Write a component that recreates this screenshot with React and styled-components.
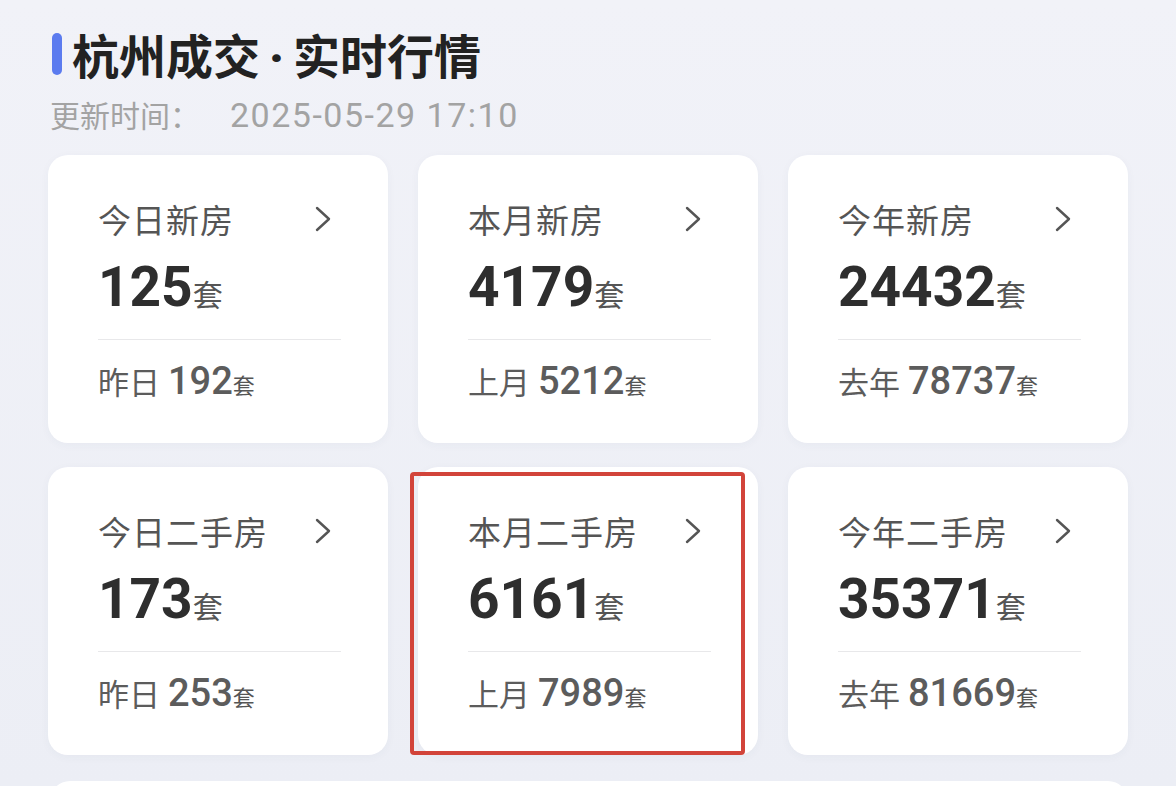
import React from 'react';
import styled, { createGlobalStyle } from 'styled-components';

const CJK = `'Noto Sans CJK SC', 'Noto Sans', sans-serif`;
const NUM = `Roboto, 'Noto Sans CJK SC', sans-serif`;

const STATS = [
    { title: '今日新房', value: 125, prevLabel: '昨日', prev: 192 },
    { title: '本月新房', value: 4179, prevLabel: '上月', prev: 5212 },
    { title: '今年新房', value: 24432, prevLabel: '去年', prev: 78737 },
    { title: '今日二手房', value: 173, prevLabel: '昨日', prev: 253 },
    { title: '本月二手房', value: 6161, prevLabel: '上月', prev: 7989, marked: true },
    { title: '今年二手房', value: 35371, prevLabel: '去年', prev: 81669 },
];

const GlobalStyle = createGlobalStyle`
    html, body {
        margin: 0;
        background: #eef0f6;
        overflow: hidden;
    }
`;

const Page = styled.div`
    width: 1176px;
    height: 786px;
    box-sizing: border-box;
    padding: 31px 0 0 48px;
    background: linear-gradient(180deg, #f1f2f8 0%, #eceef5 100%);
    overflow: hidden;
`;

const Header = styled.div`
    margin-left: 4px;
`;

const TitleRow = styled.div`
    display: flex;
    align-items: center;
    gap: 10px;
    height: 46px;
`;

const Bar = styled.span`
    width: 10px;
    height: 42px;
    border-radius: 5px;
    background: #5b7bef;
`;

const Title = styled.h1`
    margin: 0;
    height: 46px;
    font-family: ${CJK};
    font-size: 47px;
    line-height: 46px;
    font-weight: 700;
    color: #222;
`;

const Dot = styled.span`
    font-family: Roboto, sans-serif;
    font-weight: 900;
    line-height: 0;
    margin: 0 9px;
`;

const Updated = styled.div`
    margin-top: 17px;
    display: flex;
    align-items: baseline;
    gap: 30px;
    height: 40px;
    line-height: 40px;
    color: #a3a3a3;
`;

const UpdatedLabel = styled.span`
    font-family: ${CJK};
    font-size: 30px;
    margin-left: -2px;
`;

const UpdatedTime = styled.span`
    font-family: ${NUM};
    font-size: 34px;
    letter-spacing: 1.5px;
`;

const Grid = styled.div`
    margin-top: 21px;
    display: grid;
    grid-template-columns: repeat(3, 340px);
    grid-auto-rows: 288px;
    column-gap: 30px;
    row-gap: 24px;
`;

const Card = styled.div`
    position: relative;
    box-sizing: border-box;
    padding: 44px 47px 0 50px;
    background: #fff;
    border-radius: 20px;
    box-shadow: 0 2px 10px rgba(60, 70, 110, 0.04);

    &::after {
        content: '';
        display: ${({ $marked }) => ($marked ? 'block' : 'none')};
        position: absolute;
        left: -8px;
        top: 5px;
        right: 13px;
        bottom: 0;
        border: 4px solid #d2443a;
        border-radius: 4px;
        pointer-events: none;
    }
`;

const CardHead = styled.div`
    display: flex;
    align-items: center;
    justify-content: space-between;
    height: 40px;
    padding-right: 10px;
`;

const CardTitle = styled.span`
    font-family: ${CJK};
    font-size: 33px;
    letter-spacing: 1px;
    color: #555;
`;

const Chevron = styled.svg`
    width: 16px;
    height: 26px;
`;

const Value = styled.div`
    margin-top: 18px;
    height: 60px;
    line-height: 60px;
    font-family: ${NUM};
    font-size: 55px;
    font-weight: 700;
    color: #2e2e2e;
`;

const Unit = styled.span`
    font-family: ${CJK};
    font-size: ${({ $size }) => $size}px;
    font-weight: 400;
    color: #555;
`;

const Divider = styled.hr`
    margin: 22px 0 0;
    border: none;
    height: 1px;
    background: #e8e8ea;
`;

const Prev = styled.div`
    margin-top: 19px;
    line-height: 44px;
    font-family: ${NUM};
    font-size: 38px;
    font-weight: 500;
    color: #5c5c5c;
`;

const PrevLabel = styled.span`
    font-family: ${CJK};
    font-size: 31px;
    font-weight: 400;
    margin-right: 8px;
`;

const NextCard = styled.div`
    margin-top: 26px;
    margin-left: 2px;
    width: 1078px;
    height: 120px;
    background: #fff;
    border-radius: 20px;
`;

const StatCard = ({ stat }) => (
    <Card $marked={stat.marked}>
        <CardHead>
            <CardTitle>{stat.title}</CardTitle>
            <Chevron viewBox="0 0 16 26" fill="none">
                <polyline
                    points="2,2 14,13 2,24"
                    stroke="#555"
                    strokeWidth="2.4"
                    strokeLinecap="round"
                    strokeLinejoin="round"
                />
            </Chevron>
        </CardHead>
        <Value>
            {stat.value}
            <Unit $size={30}>套</Unit>
        </Value>
        <Divider />
        <Prev>
            <PrevLabel>{stat.prevLabel}</PrevLabel>
            {stat.prev}
            <Unit $size={22}>套</Unit>
        </Prev>
    </Card>
);

export default function App() {
    return (
        <>
            <GlobalStyle />
            <Page>
                <Header>
                    <TitleRow>
                        <Bar />
                        <Title>
                            杭州成交<Dot>·</Dot>实时行情
                        </Title>
                    </TitleRow>
                    <Updated>
                        <UpdatedLabel>更新时间：</UpdatedLabel>
                        <UpdatedTime>2025-05-29 17:10</UpdatedTime>
                    </Updated>
                </Header>
                <Grid>
                    {STATS.map((stat) => (
                        <StatCard key={stat.title} stat={stat} />
                    ))}
                </Grid>
                <NextCard />
            </Page>
        </>
    );
}
